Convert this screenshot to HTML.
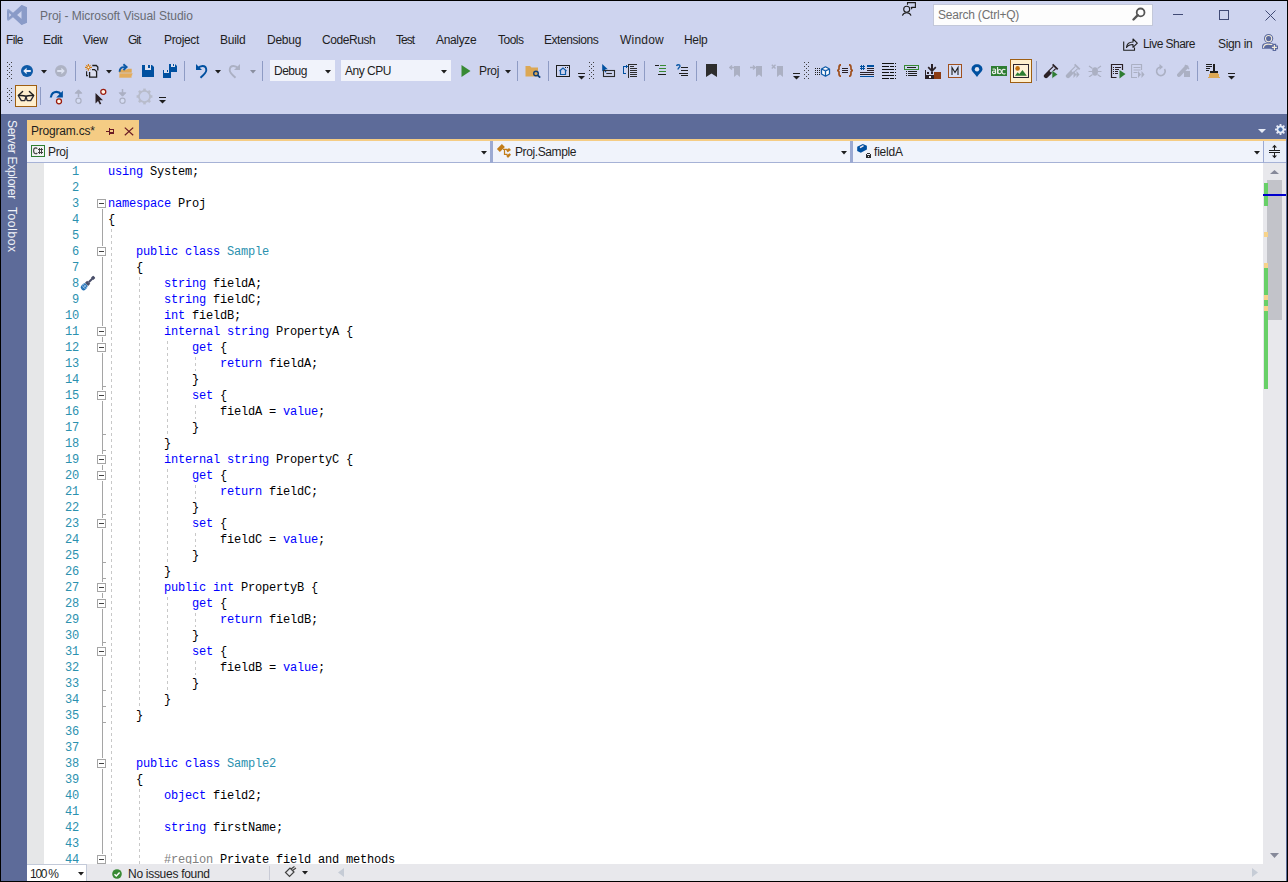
<!DOCTYPE html>
<html><head><meta charset="utf-8"><title>Proj - Microsoft Visual Studio</title>
<style>
html,body{margin:0;padding:0;}
body{width:1288px;height:882px;overflow:hidden;position:relative;background:#CED4EF;font-family:"Liberation Sans",sans-serif;}
.t{position:absolute;white-space:pre;line-height:16px;font-family:"Liberation Sans",sans-serif;}
.code{position:absolute;left:108px;top:164px;font-family:"Liberation Mono",monospace;font-size:12px;letter-spacing:-0.2px;line-height:16px;white-space:pre;color:#000;}
.code div{height:16px;}
.k{color:#0000FF}.c{color:#2B91AF}.g{color:#808080}
.ln{position:absolute;left:44px;width:36px;text-align:right;font-family:"Liberation Mono",monospace;font-size:12px;letter-spacing:-0.2px;line-height:16px;color:#2B91AF;white-space:pre;}
svg{display:block}
</style></head><body>
<svg style="position:absolute;left:7px;top:5px;" width="21" height="21" viewBox="0 0 21 21"><path d="M0 4.6 L1.6 3.9 L7 8.4 L14.7 0 L20 2.4 V17.5 L14.7 19.8 L7 11.4 L1.6 15.8 L0 15.2 Z M2 6.7 V13.1 L5.4 9.9 Z M10.1 9.9 L15 14.1 V5.8 Z" fill="#93A4CD" fill-rule="evenodd"/></svg>
<svg style="position:absolute;left:7px;top:5px;" width="20" height="20" viewBox="0 0 20 20"><path d="M14.5 0 L20 2.3 V17.7 L14.5 20 L5.5 11.8 L2 14.6 L0 13.6 V6.4 L2 5.4 L5.5 8.2 Z M14.5 5.6 L9.6 10 L14.5 14.4 Z M2.2 8 V12 L4.4 10 Z" fill="#8A9BC8" fill-rule="evenodd"/></svg>
<div class="t" style="left:40px;top:8px;font-size:12px;color:#686B73;letter-spacing:-0.034px;">Proj - Microsoft Visual Studio</div>
<svg style="position:absolute;left:896px;top:0px;" width="24" height="18" viewBox="0 0 24 18"><path d="M11.5 4.8 V2.6 H19.4 V7.4 H15.4" fill="none" stroke="#1E1E1E" stroke-width="1.1"/><path d="M14.6 7 L15.4 9.8 L17.2 7 Z" fill="#1E1E1E"/><circle cx="10.7" cy="9.3" r="3" fill="none" stroke="#1E1E1E" stroke-width="1.1"/><path d="M6.4 15.6 C7 13.6 8.5 12.7 10.7 12.7 C12.9 12.7 14.4 13.6 15 15.6" fill="none" stroke="#1E1E1E" stroke-width="1.1"/></svg>
<div style="position:absolute;left:933px;top:4px;width:220px;height:22px;background:#FDFDFD;box-sizing:border-box;border:1px solid #C3C8D9;"></div>
<div class="t" style="left:938px;top:7px;font-size:12px;color:#717171;letter-spacing:-0.214px;">Search (Ctrl+Q)</div>
<svg style="position:absolute;left:1132px;top:7px;" width="14" height="14" viewBox="0 0 14 14"><circle cx="8.6" cy="5.4" r="3.9" fill="none" stroke="#555" stroke-width="1.8"/><path d="M5.8 8.2 L1.5 12.5" stroke="#555" stroke-width="2.4" stroke-linecap="round"/></svg>
<div style="position:absolute;left:1173px;top:14px;width:10px;height:1px;background:#404A75;"></div>
<div style="position:absolute;left:1219px;top:10px;width:10px;height:10px;background:transparent;box-sizing:border-box;border:1px solid #404A75;"></div>
<svg style="position:absolute;left:1265px;top:10px;" width="11" height="11" viewBox="0 0 11 11"><path d="M0.5 0.5 L10.5 10.5 M10.5 0.5 L0.5 10.5" stroke="#404A75" stroke-width="1"/></svg>
<div class="t" style="left:6px;top:32px;font-size:12px;color:#1E1E1E;letter-spacing:-0.667px;">File</div>
<div class="t" style="left:43px;top:32px;font-size:12px;color:#1E1E1E;letter-spacing:-0.333px;">Edit</div>
<div class="t" style="left:83px;top:32px;font-size:12px;color:#1E1E1E;letter-spacing:-0.333px;">View</div>
<div class="t" style="left:128px;top:32px;font-size:12px;color:#1E1E1E;letter-spacing:-1.000px;">Git</div>
<div class="t" style="left:164px;top:32px;font-size:12px;color:#1E1E1E;letter-spacing:-0.333px;">Project</div>
<div class="t" style="left:220px;top:32px;font-size:12px;color:#1E1E1E;letter-spacing:-0.250px;">Build</div>
<div class="t" style="left:267px;top:32px;font-size:12px;color:#1E1E1E;letter-spacing:-0.250px;">Debug</div>
<div class="t" style="left:322px;top:32px;font-size:12px;color:#1E1E1E;letter-spacing:-0.429px;">CodeRush</div>
<div class="t" style="left:396px;top:32px;font-size:12px;color:#1E1E1E;letter-spacing:-1.000px;">Test</div>
<div class="t" style="left:436px;top:32px;font-size:12px;color:#1E1E1E;letter-spacing:-0.333px;">Analyze</div>
<div class="t" style="left:498px;top:32px;font-size:12px;color:#1E1E1E;letter-spacing:-0.500px;">Tools</div>
<div class="t" style="left:544px;top:32px;font-size:12px;color:#1E1E1E;letter-spacing:-0.444px;">Extensions</div>
<div class="t" style="left:620px;top:32px;font-size:12px;color:#1E1E1E;letter-spacing:0.200px;">Window</div>
<div class="t" style="left:684px;top:32px;font-size:12px;color:#1E1E1E;letter-spacing:-0.333px;">Help</div>
<svg style="position:absolute;left:1123px;top:37px;" width="15" height="14" viewBox="0 0 15 14"><path d="M0.7 4.5 V13.3 H11.5 V10.5" fill="none" stroke="#1e1e1e" stroke-width="1.1"/><path d="M3.5 10.5 C3.8 6.5 6.5 5 10 5 V2 L14.3 6.2 L10 10.3 V7.5 C7.2 7.5 5 8.3 3.5 10.5 Z" fill="none" stroke="#1e1e1e" stroke-width="1.1" stroke-linejoin="round"/></svg>
<div class="t" style="left:1143px;top:36px;font-size:12px;color:#1E1E1E;letter-spacing:-0.556px;">Live Share</div>
<div class="t" style="left:1218px;top:36px;font-size:12px;color:#1E1E1E;letter-spacing:-0.333px;">Sign in</div>
<svg style="position:absolute;left:1256px;top:30px;" width="30" height="26" viewBox="0 0 30 26"><path d="M6 18.7 V16.5 C6 13.5 8.5 12.7 12.3 12.7 C15 12.7 17 13.3 17.8 14.5 V18.7 Z" fill="#5B6A9E"/><path d="M7.4 17.9 C7.6 15.2 9.5 14.1 12.3 14.1 C14 14.1 15.6 14.5 16.5 15.1" fill="none" stroke="#F3EBD8" stroke-width="1.2"/><circle cx="12.6" cy="8.6" r="4.6" fill="#5B6A9E"/><circle cx="12.6" cy="8.6" r="3.1" fill="#5B6A9E" stroke="#F3EBD8" stroke-width="1.1"/><path d="M18.4 13.8 V21 M14.8 17.4 H22" stroke="#5B6A9E" stroke-width="3.6"/><path d="M18.4 14.9 V19.9 M15.9 17.4 H20.9" stroke="#F3EBD8" stroke-width="1.2"/></svg>
<svg style="position:absolute;left:7px;top:62px;" width="5" height="18" viewBox="0 0 5 18" shape-rendering="crispEdges"><g fill="#404040"><rect x="0" y="0" width="1" height="1"/><rect x="4" y="0" width="1" height="1"/><rect x="2" y="2" width="1" height="1"/><rect x="0" y="4" width="1" height="1"/><rect x="4" y="4" width="1" height="1"/><rect x="2" y="6" width="1" height="1"/><rect x="0" y="8" width="1" height="1"/><rect x="4" y="8" width="1" height="1"/><rect x="2" y="10" width="1" height="1"/><rect x="0" y="12" width="1" height="1"/><rect x="4" y="12" width="1" height="1"/><rect x="2" y="14" width="1" height="1"/><rect x="0" y="16" width="1" height="1"/><rect x="4" y="16" width="1" height="1"/></g></svg>
<svg style="position:absolute;left:21px;top:65px;" width="12" height="12" viewBox="0 0 12 12"><circle cx="6" cy="6" r="6" fill="#0E5AA7"/><path d="M2.2 6 L5.6 2.8 V5 H9.8 V7 H5.6 V9.2 Z" fill="#E8ECF8"/></svg>
<svg style="position:absolute;left:41px;top:70px;" width="6" height="4" viewBox="0 0 6 4"><path d="M0 0 H6 L3 3.5 Z" fill="#1E1E1E"/></svg>
<svg style="position:absolute;left:55px;top:65px;" width="12" height="12" viewBox="0 0 12 12"><circle cx="6" cy="6" r="6" fill="#AEB3C4"/><path d="M9.8 6 L6.4 2.8 V5 H2.2 V7 H6.4 V9.2 Z" fill="#DDE2F0"/></svg>
<div style="position:absolute;left:75px;top:61px;width:1px;height:20px;background:#8E9BC4;"></div>
<svg style="position:absolute;left:85px;top:64px;" width="14" height="15" viewBox="0 0 14 15"><g stroke="#D67F16" stroke-width="1.2"><path d="M3.4 -0.2 V6.8 M-0.1 3.3 H6.9"/><path d="M1 0.9 L5.8 5.7 M5.8 0.9 L1 5.7" stroke-width="0.9"/></g><circle cx="3.4" cy="3.3" r="1.4" fill="#F5F0E6" stroke="#D67F16" stroke-width="1"/><path d="M7.3 1.5 H11.3 L12.8 3 V6.6" fill="none" stroke="#1E1E1E" stroke-width="1.3"/><path d="M4.6 8 V13.2 H11.6 V7.6 L9.5 5.6 H7" fill="#DCDFEF" stroke="#1E1E1E" stroke-width="1.3"/><path d="M1.6 7.2 V11.6 H2.9" fill="none" stroke="#1E1E1E" stroke-width="1.1"/></svg>
<svg style="position:absolute;left:106px;top:70px;" width="6" height="4" viewBox="0 0 6 4"><path d="M0 0 H6 L3 3.5 Z" fill="#1E1E1E"/></svg>
<svg style="position:absolute;left:116px;top:62px;" width="20" height="18" viewBox="0 0 20 18"><path d="M3 7.5 H11 L12 6.7 H15.7 V16 H3 Z" fill="#DFA857"/><path d="M3.4 11 H17.1 L15.2 16 H3 Z" fill="#E3AC5C" stroke="#CED4EF" stroke-width="0.6"/><path d="M3.6 9.8 C3.6 6.6 5 5.1 8 5.1 H10.4" fill="none" stroke="#0E5AA7" stroke-width="1.9"/><path d="M7.4 2.3 L10.6 5.1 L7.4 8" fill="none" stroke="#0E5AA7" stroke-width="1.9"/></svg>
<svg style="position:absolute;left:142px;top:65px;" width="12" height="12" viewBox="0 0 12 12" shape-rendering="crispEdges"><path d="M0 0 H10 L12 2 V12 H0 Z" fill="#0050A0" shape-rendering="auto"/><rect x="3" y="0" width="6" height="5" fill="#DCE0F0"/><rect x="6" y="0" width="2" height="3" fill="#0050A0"/></svg>
<svg style="position:absolute;left:163px;top:64px;" width="14" height="14" viewBox="0 0 14 14" shape-rendering="crispEdges"><path d="M6 0 H12 L14 2 V8 H6 Z" fill="#0050A0" shape-rendering="auto"/><rect x="8" y="0" width="4" height="3" fill="#DCE0F0"/><rect x="10" y="0" width="1" height="2" fill="#0050A0"/><path d="M0 6 H6 L8 8 V14 H0 Z" fill="#0050A0" shape-rendering="auto"/><rect x="1" y="6" width="5" height="3" fill="#DCE0F0"/><rect x="4" y="6" width="1" height="2" fill="#0050A0"/></svg>
<div style="position:absolute;left:184px;top:61px;width:1px;height:20px;background:#8E9BC4;"></div>
<svg style="position:absolute;left:193px;top:62px;" width="15" height="18" viewBox="0 0 15 18"><path d="M3 2 V8 H9 Z" fill="#0050A0"/><path d="M4.5 6.5 C6.5 4.5 8 4 9.5 4 C12 4 13.3 5.8 13.3 8.2 C13.3 10.5 11.5 12.2 7.5 15.8" fill="none" stroke="#0050A0" stroke-width="1.9"/></svg>
<svg style="position:absolute;left:215px;top:70px;" width="6" height="4" viewBox="0 0 6 4"><path d="M0 0 H6 L3 3.5 Z" fill="#1E1E1E"/></svg>
<svg style="position:absolute;left:228px;top:62px;" width="15" height="18" viewBox="0 0 15 18"><path d="M12 2 V8 H6 Z" fill="#ABB0C3"/><path d="M10.5 6.5 C8.5 4.5 7 4 5.5 4 C3 4 1.7 5.8 1.7 8.2 C1.7 10.5 3.5 12.2 7.5 15.8" fill="none" stroke="#ABB0C3" stroke-width="1.9"/></svg>
<svg style="position:absolute;left:250px;top:70px;" width="6" height="4" viewBox="0 0 6 4"><path d="M0 0 H6 L3 3.5 Z" fill="#8A8FA0"/></svg>
<div style="position:absolute;left:262px;top:61px;width:1px;height:20px;background:#8E9BC4;"></div>
<div style="position:absolute;left:270px;top:60px;width:65px;height:21px;background:#F1F3FB;"></div>
<div class="t" style="left:274px;top:63px;font-size:12px;color:#1E1E1E;letter-spacing:-0.500px;">Debug</div>
<svg style="position:absolute;left:325px;top:70px;" width="6" height="4" viewBox="0 0 6 4"><path d="M0 0 H6 L3 3.5 Z" fill="#1E1E1E"/></svg>
<div style="position:absolute;left:341px;top:60px;width:110px;height:21px;background:#F1F3FB;"></div>
<div class="t" style="left:345px;top:63px;font-size:12px;color:#1E1E1E;letter-spacing:-0.500px;">Any CPU</div>
<svg style="position:absolute;left:441px;top:70px;" width="6" height="4" viewBox="0 0 6 4"><path d="M0 0 H6 L3 3.5 Z" fill="#1E1E1E"/></svg>
<svg style="position:absolute;left:461px;top:65px;" width="10" height="12" viewBox="0 0 10 12"><path d="M0.5 0 L9.5 6 L0.5 12 Z" fill="#388A34"/></svg>
<div class="t" style="left:479px;top:63px;font-size:12px;color:#1E1E1E;letter-spacing:-0.333px;">Proj</div>
<svg style="position:absolute;left:505px;top:70px;" width="6" height="4" viewBox="0 0 6 4"><path d="M0 0 H6 L3 3.5 Z" fill="#1E1E1E"/></svg>
<div style="position:absolute;left:517px;top:61px;width:1px;height:20px;background:#8E9BC4;"></div>
<svg style="position:absolute;left:525px;top:64px;" width="16" height="14" viewBox="0 0 16 14"><path d="M0.5 2 H5 L6.5 3.5 H13 V12.5 H0.5 Z" fill="#DCA855"/><circle cx="11" cy="9.5" r="2.3" fill="#DCA855" stroke="#0E3F7A" stroke-width="1.4"/><path d="M12.6 11.1 L15.2 13.6" stroke="#0E3F7A" stroke-width="1.8"/></svg>
<div style="position:absolute;left:548px;top:61px;width:1px;height:20px;background:#8E9BC4;"></div>
<svg style="position:absolute;left:556px;top:65px;" width="14" height="12" viewBox="0 0 14 12" shape-rendering="crispEdges"><rect x="0.5" y="0.5" width="13" height="11" fill="none" stroke="#1E1E1E" stroke-width="1"/><path d="M3.5 6 L7 3 L10.5 6 M4.5 5.5 V9.5 H9.5 V5.5" fill="none" stroke="#0E5AA7" stroke-width="1.2" shape-rendering="auto"/><rect x="11" y="2" width="1" height="1" fill="#1E1E1E"/><rect x="9" y="2" width="1" height="1" fill="#1E1E1E"/></svg>
<svg style="position:absolute;left:578px;top:73px;" width="7" height="7" viewBox="0 0 7 7" shape-rendering="crispEdges"><g fill="#1E1E1E"><rect x="0" y="0" width="7" height="1"/><path d="M0 3 H7 L3.5 6.5 Z" shape-rendering="auto"/></g></svg>
<svg style="position:absolute;left:589px;top:62px;" width="5" height="18" viewBox="0 0 5 18" shape-rendering="crispEdges"><g fill="#404040"><rect x="0" y="0" width="1" height="1"/><rect x="4" y="0" width="1" height="1"/><rect x="2" y="2" width="1" height="1"/><rect x="0" y="4" width="1" height="1"/><rect x="4" y="4" width="1" height="1"/><rect x="2" y="6" width="1" height="1"/><rect x="0" y="8" width="1" height="1"/><rect x="4" y="8" width="1" height="1"/><rect x="2" y="10" width="1" height="1"/><rect x="0" y="12" width="1" height="1"/><rect x="4" y="12" width="1" height="1"/><rect x="2" y="14" width="1" height="1"/><rect x="0" y="16" width="1" height="1"/><rect x="4" y="16" width="1" height="1"/></g></svg>
<svg style="position:absolute;left:600px;top:62px;" width="18" height="18" viewBox="0 0 18 18"><path d="M2.2 2 V9.5 L4 7.8 L5.3 10.5 L6.4 10 L5.2 7.3 H7.8 Z" fill="#0050A0"/><rect x="3.5" y="8.5" width="11" height="6" fill="none" stroke="#2D2D2D" stroke-width="1.1"/><path d="M6.3 11.5 H11.9" stroke="#2D2D2D" stroke-width="1.1"/></svg>
<svg style="position:absolute;left:622px;top:62px;" width="16" height="17" viewBox="0 0 16 17" shape-rendering="crispEdges"><g fill="#0050A0"><rect x="1" y="4" width="1" height="8"/><rect x="1" y="4" width="3" height="1"/><rect x="1" y="11" width="3" height="1"/><rect x="4" y="3" width="1" height="3"/><rect x="3" y="4" width="3" height="1"/></g><g fill="#2D2D2D"><rect x="6" y="2" width="1" height="14"/><rect x="6" y="2" width="9" height="1"/><rect x="8" y="4" width="4" height="1"/><rect x="8" y="6" width="7" height="1"/><rect x="8" y="8" width="7" height="1"/><rect x="8" y="10" width="7" height="1"/><rect x="8" y="12" width="7" height="1"/><rect x="8" y="14" width="7" height="1"/></g></svg>
<div style="position:absolute;left:644px;top:61px;width:1px;height:20px;background:#8E9BC4;"></div>
<svg style="position:absolute;left:655px;top:65px;" width="11" height="10" viewBox="0 0 11 10" shape-rendering="crispEdges"><g fill="#1E1E1E"><rect x="0" y="0" width="4" height="1"/><rect x="3" y="9" width="8" height="1"/></g><g fill="#388A34"><rect x="4" y="3" width="7" height="1"/><rect x="4" y="6" width="7" height="1"/><rect x="5" y="0" width="6" height="1"/></g></svg>
<svg style="position:absolute;left:676px;top:64px;" width="12" height="12" viewBox="0 0 12 12" shape-rendering="crispEdges"><path d="M0.5 2 C1 0.3 4 0.3 4 2 C4 3.5 2 3.5 2 5.5" fill="none" stroke="#0E5AA7" stroke-width="1.4" shape-rendering="auto"/><g fill="#1E1E1E"><rect x="5" y="3" width="7" height="1"/><rect x="5" y="6" width="7" height="1"/><rect x="3" y="9" width="9" height="1"/><rect x="5" y="11" width="7" height="1"/></g></svg>
<div style="position:absolute;left:696px;top:61px;width:1px;height:20px;background:#8E9BC4;"></div>
<svg style="position:absolute;left:706px;top:64px;" width="11" height="13" viewBox="0 0 11 13" shape-rendering="crispEdges"><path d="M0 0 H11 V13 L5.5 9.5 L0 13 Z" fill="#2D2D2D" shape-rendering="auto"/></svg>
<svg style="position:absolute;left:729px;top:64px;" width="11" height="13" viewBox="0 0 11 13"><path d="M5 2 H11 V13 L8 10.5 L5 13 Z" fill="#ABB0C3"/><path d="M5 3.5 H0.8 M3 1.5 L0.8 3.5 L3 5.5" fill="none" stroke="#ABB0C3" stroke-width="1.4"/></svg>
<svg style="position:absolute;left:750px;top:64px;" width="12" height="13" viewBox="0 0 12 13"><path d="M6 2 H12 V13 L9 10.5 L6 13 Z" fill="#ABB0C3"/><path d="M0 3.5 H5 M3 1.5 L5.2 3.5 L3 5.5" fill="none" stroke="#ABB0C3" stroke-width="1.4"/></svg>
<svg style="position:absolute;left:771px;top:64px;" width="12" height="13" viewBox="0 0 12 13"><path d="M6 2 H12 V13 L9 10.5 L6 13 Z" fill="#ABB0C3"/><path d="M0.8 0.8 L4.5 4.5 M4.5 0.8 L0.8 4.5" fill="none" stroke="#ABB0C3" stroke-width="1.4"/></svg>
<svg style="position:absolute;left:793px;top:73px;" width="7" height="7" viewBox="0 0 7 7" shape-rendering="crispEdges"><g fill="#1E1E1E"><rect x="0" y="0" width="7" height="1"/><path d="M0 3 H7 L3.5 6.5 Z" shape-rendering="auto"/></g></svg>
<svg style="position:absolute;left:804px;top:62px;" width="5" height="18" viewBox="0 0 5 18" shape-rendering="crispEdges"><g fill="#404040"><rect x="0" y="0" width="1" height="1"/><rect x="4" y="0" width="1" height="1"/><rect x="2" y="2" width="1" height="1"/><rect x="0" y="4" width="1" height="1"/><rect x="4" y="4" width="1" height="1"/><rect x="2" y="6" width="1" height="1"/><rect x="0" y="8" width="1" height="1"/><rect x="4" y="8" width="1" height="1"/><rect x="2" y="10" width="1" height="1"/><rect x="0" y="12" width="1" height="1"/><rect x="4" y="12" width="1" height="1"/><rect x="2" y="14" width="1" height="1"/><rect x="0" y="16" width="1" height="1"/><rect x="4" y="16" width="1" height="1"/></g></svg>
<svg style="position:absolute;left:815px;top:66px;" width="16" height="11" viewBox="0 0 16 11"><g fill="#1E1E1E"><rect x="0" y="2" width="1" height="1"/><rect x="2" y="2" width="1" height="1"/><rect x="0" y="4" width="1" height="1"/><rect x="2" y="4" width="1" height="1"/><rect x="0" y="6" width="1" height="1"/><rect x="2" y="6" width="1" height="1"/><rect x="0" y="8" width="1" height="1"/><rect x="2" y="8" width="1" height="1"/><rect x="4" y="2" width="1" height="1"/><rect x="4" y="4" width="1" height="1"/><rect x="4" y="6" width="1" height="1"/><rect x="4" y="8" width="1" height="1"/></g><path d="M6.5 3 L10.5 0.8 L14.5 3 V8 L10.5 10.2 L6.5 8 Z M6.5 3 L10.5 5 L14.5 3 M10.5 5 V10" fill="#FFFFFF" stroke="#0E5AA7" stroke-width="1.3" stroke-linejoin="round"/></svg>
<svg style="position:absolute;left:837px;top:64px;" width="16" height="13" viewBox="0 0 16 13"><path d="M4 0.8 C2 0.8 2 1.8 2 3.5 V5.2 L0.8 6.5 L2 7.8 V9.5 C2 11.2 2 12.2 4 12.2 M12 0.8 C14 0.8 14 1.8 14 3.5 V5.2 L15.2 6.5 L14 7.8 V9.5 C14 11.2 14 12.2 12 12.2" fill="none" stroke="#A0501E" stroke-width="1.7"/><g fill="#2A2025" shape-rendering="crispEdges"><rect x="5" y="4" width="6" height="1"/><rect x="5" y="6" width="6" height="1"/><rect x="5" y="8" width="6" height="1"/></g></svg>
<svg style="position:absolute;left:860px;top:64px;" width="14" height="14" viewBox="0 0 14 14" shape-rendering="crispEdges"><g fill="#0050A0"><rect x="1" y="1" width="1" height="5"/><rect x="3" y="1" width="1" height="5"/><rect x="0" y="2" width="5" height="1"/><rect x="0" y="4" width="5" height="1"/><rect x="7" y="1" width="7" height="2"/><rect x="0" y="12" width="14" height="1"/></g><g fill="#2A2025"><rect x="7" y="4" width="7" height="1"/><rect x="7" y="6" width="7" height="1"/><rect x="0" y="8" width="14" height="1"/><rect x="0" y="10" width="14" height="1"/></g></svg>
<svg style="position:absolute;left:882px;top:63px;" width="15" height="17" viewBox="0 0 15 17" shape-rendering="crispEdges"><g fill="#111"><rect x="0" y="0" width="12" height="1"/><rect x="13" y="0" width="1" height="1"/><rect x="0" y="3" width="7" height="1"/><rect x="8" y="3" width="4" height="1"/><rect x="13" y="3" width="1" height="1"/><rect x="0" y="6" width="12" height="1"/><rect x="13" y="6" width="1" height="1"/><rect x="0" y="9" width="7" height="1"/><rect x="8" y="9" width="4" height="1"/><rect x="13" y="9" width="1" height="1"/><rect x="0" y="12" width="12" height="1"/><rect x="13" y="12" width="1" height="1"/><rect x="0" y="15" width="7" height="1"/><rect x="8" y="15" width="4" height="1"/><rect x="13" y="15" width="1" height="1"/></g></svg>
<svg style="position:absolute;left:904px;top:65px;" width="15" height="12" viewBox="0 0 15 12" shape-rendering="crispEdges"><rect x="0.5" y="0.5" width="14" height="4" fill="none" stroke="#388A34" stroke-width="1"/><rect x="3" y="2" width="9" height="1" fill="#1E1E1E"/><g fill="#1E1E1E"><rect x="2" y="6" width="1" height="1"/><rect x="4" y="6" width="9" height="1"/><rect x="2" y="8" width="1" height="1"/><rect x="4" y="8" width="9" height="1"/><rect x="2" y="10" width="1" height="1"/><rect x="4" y="10" width="9" height="1"/></g></svg>
<svg style="position:absolute;left:924px;top:62px;" width="18" height="18" viewBox="0 0 18 18" shape-rendering="crispEdges"><g fill="#2A2025"><rect x="7" y="2" width="2" height="6"/><rect x="1" y="8" width="1" height="9"/><rect x="1" y="13" width="10" height="4"/><rect x="10" y="12" width="1" height="5"/><rect x="3" y="10" width="2" height="2"/><rect x="7" y="10" width="2" height="2"/></g><rect x="5" y="14" width="2" height="2" fill="#F0F0F4"/><path d="M4.2 5.2 L8 9 L11.8 5.2" fill="none" stroke="#2A2025" stroke-width="1.7" shape-rendering="auto"/><rect x="10" y="10" width="7" height="7" fill="#8B3A12"/></svg>
<svg style="position:absolute;left:948px;top:64px;" width="14" height="14" viewBox="0 0 14 14" shape-rendering="crispEdges"><rect x="0.5" y="0.5" width="13" height="13" fill="#D8DFF6" stroke="#A0501E" stroke-width="1"/><path d="M4 11 V3.5 L7 8.5 L10 3.5 V11" fill="none" stroke="#1E1E1E" stroke-width="1.1" stroke-linejoin="miter" shape-rendering="auto"/></svg>
<svg style="position:absolute;left:971px;top:64px;" width="12" height="13" viewBox="0 0 12 13"><path d="M6 13 C3 9 0.5 7 0.5 5.3 C0.5 2.3 3 0.3 6 0.3 C9 0.3 11.5 2.3 11.5 5.3 C11.5 7 9 9 6 13 Z" fill="#0050A0"/><circle cx="6" cy="5.3" r="2.2" fill="#DDE2F0"/></svg>
<div style="position:absolute;left:991px;top:66px;width:16px;height:10px;background:#2E7D32;"></div>
<svg style="position:absolute;left:991px;top:66px;" width="16" height="10" viewBox="0 0 16 10"><g fill="none" stroke="#F2F2F2" stroke-width="1.05"><path d="M1.6 3.3 C2.5 2.8 4.5 2.7 4.6 4 V7.8"/><ellipse cx="3" cy="6.3" rx="1.6" ry="1.3"/><path d="M6.6 1 V7.8"/><ellipse cx="8.6" cy="5.6" rx="1.8" ry="2.1"/><path d="M14.4 3.9 C13.9 3.3 13.4 3.2 12.9 3.2 C11.8 3.2 11 4.1 11 5.6 C11 7.1 11.8 8 12.9 8 C13.4 8 13.9 7.8 14.4 7.3"/></g></svg>
<div style="position:absolute;left:1010px;top:59px;width:22px;height:24px;background:#FFEFCE;box-sizing:border-box;border:1px solid #9E5E12;"></div>
<svg style="position:absolute;left:1013px;top:64px;" width="16" height="14" viewBox="0 0 16 14" shape-rendering="crispEdges"><rect x="0.5" y="0.5" width="15" height="13" fill="#FFF1D8" stroke="#2D2630" stroke-width="1"/><circle cx="4.6" cy="4.4" r="2.3" fill="#C2700F" shape-rendering="auto"/><path d="M2 11.8 L4.6 8.2 L6.3 10 L9.5 6 L13.8 11.8 Z" fill="#2E7D32" shape-rendering="auto"/></svg>
<div style="position:absolute;left:1036px;top:61px;width:1px;height:20px;background:#8E9BC4;"></div>
<svg style="position:absolute;left:1043px;top:62px;" width="18" height="18" viewBox="0 0 18 18"><g transform="translate(8,9) rotate(-45)"><path d="M-7 -2.2 H-1 V2.2 H-7 A2.2 2.2 0 0 1 -7 -2.2 Z" fill="#2A2025"/><path d="M-1.5 -1.6 H5 M-1.5 1.6 H5" stroke="#2A2025" stroke-width="1.2"/><rect x="5" y="-3.6" width="1.8" height="7.2" fill="#2A2025"/></g><path d="M9 8.2 L14.8 12.4 L9 16.6 Z" fill="#2E7D32" stroke="#CED4EF" stroke-width="0.6"/></svg>
<svg style="position:absolute;left:1065px;top:62px;" width="18" height="18" viewBox="0 0 18 18"><g transform="translate(8,9) rotate(-45)"><path d="M-7 -2.2 H-1 V2.2 H-7 A2.2 2.2 0 0 1 -7 -2.2 Z" fill="#ABB0C3"/><path d="M-1.5 -1.6 H5 M-1.5 1.6 H5" stroke="#ABB0C3" stroke-width="1.2"/><rect x="5" y="-3.6" width="1.8" height="7.2" fill="#ABB0C3"/></g><path d="M8.5 9 L11.5 12.5 L8.5 16 Z M11.5 9 L14.5 12.5 L11.5 16 Z" fill="#ABB0C3"/></svg>
<svg style="position:absolute;left:1088px;top:64px;" width="14" height="13" viewBox="0 0 14 13"><ellipse cx="7" cy="7.5" rx="3" ry="4.2" fill="#ABB0C3"/><path d="M1 2 L4.5 4.5 M13 2 L9.5 4.5 M0.5 7.5 H4 M13.5 7.5 H10 M1 13 L4.5 10.5 M13 13 L9.5 10.5" stroke="#ABB0C3" stroke-width="1.2"/></svg>
<svg style="position:absolute;left:1110px;top:63px;" width="17" height="17" viewBox="0 0 17 17"><path d="M6.5 14.5 H1.5 V1.5 H12.5 V7" fill="none" stroke="#2A2025" stroke-width="1.2"/><g fill="#2A2025" shape-rendering="crispEdges"><rect x="3" y="4" width="1" height="1"/><rect x="5" y="4" width="6" height="1"/><rect x="3" y="6" width="1" height="1"/><rect x="5" y="6" width="4" height="1"/><rect x="3" y="8" width="1" height="1"/><rect x="5" y="8" width="3" height="1"/><rect x="3" y="10" width="1" height="1"/><rect x="5" y="10" width="3" height="1"/></g><path d="M9.5 7 L15.5 11 L9.5 15.5 Z" fill="#2E7D32"/></svg>
<svg style="position:absolute;left:1131px;top:64px;" width="15" height="14" viewBox="0 0 15 14"><path d="M0.5 0.5 H10.5 V6 M0.5 0.5 V13.5 H6" fill="none" stroke="#ABB0C3" stroke-width="1.2"/><g fill="#ABB0C3"><rect x="2.5" y="3" width="7" height="1"/><rect x="2.5" y="5.5" width="7" height="1"/><rect x="2.5" y="8" width="4" height="1"/><path d="M7 7 L10 10.5 L7 14 Z M10.5 7 L13.5 10.5 L10.5 14 Z"/></g></svg>
<svg style="position:absolute;left:1155px;top:64px;" width="12" height="14" viewBox="0 0 12 14"><path d="M9.5 5 A4.3 4.3 0 1 1 5.5 3" fill="none" stroke="#ABB0C3" stroke-width="1.6"/><path d="M4.5 0 L8 3 L4.5 6 Z" fill="#ABB0C3"/></svg>
<svg style="position:absolute;left:1177px;top:63px;" width="14" height="15" viewBox="0 0 14 15"><path d="M2 12 L9.5 4" stroke="#ABB0C3" stroke-width="4" stroke-linecap="round"/><path d="M8 2 L12 6" stroke="#ABB0C3" stroke-width="1.5"/><rect x="7" y="8" width="6" height="6" fill="#ABB0C3"/></svg>
<div style="position:absolute;left:1197px;top:61px;width:1px;height:20px;background:#8E9BC4;"></div>
<svg style="position:absolute;left:1206px;top:64px;" width="15" height="14" viewBox="0 0 15 14" shape-rendering="crispEdges"><g fill="#1E1E1E"><rect x="0" y="0" width="6" height="1"/><rect x="0" y="2" width="6" height="1"/><rect x="0" y="4" width="4" height="1"/><rect x="0" y="6" width="3" height="1"/><rect x="7" y="0" width="2" height="7"/><rect x="4" y="7" width="8" height="2"/></g><path d="M4 9 H12 L14 14 H2 Z" fill="#DCA855"/></svg>
<svg style="position:absolute;left:1228px;top:73px;" width="7" height="7" viewBox="0 0 7 7" shape-rendering="crispEdges"><g fill="#1E1E1E"><rect x="0" y="0" width="7" height="1"/><path d="M0 3 H7 L3.5 6.5 Z" shape-rendering="auto"/></g></svg>
<svg style="position:absolute;left:7px;top:88px;" width="5" height="16" viewBox="0 0 5 16" shape-rendering="crispEdges"><g fill="#404040"><rect x="0" y="0" width="1" height="1"/><rect x="4" y="0" width="1" height="1"/><rect x="2" y="2" width="1" height="1"/><rect x="0" y="4" width="1" height="1"/><rect x="4" y="4" width="1" height="1"/><rect x="2" y="6" width="1" height="1"/><rect x="0" y="8" width="1" height="1"/><rect x="4" y="8" width="1" height="1"/><rect x="2" y="10" width="1" height="1"/><rect x="0" y="12" width="1" height="1"/><rect x="4" y="12" width="1" height="1"/><rect x="2" y="14" width="1" height="1"/></g></svg>
<div style="position:absolute;left:15px;top:85px;width:22px;height:22px;background:#FFEFCE;box-sizing:border-box;border:1px solid #9E5E12;"></div>
<svg style="position:absolute;left:15px;top:85px;" width="22" height="22" viewBox="0 0 22 22"><path d="M3.3 10.6 L7.6 6.5 M18.7 10.6 L14.4 6.5" stroke="#1E1E1E" stroke-width="1.4" stroke-linecap="round"/><path d="M3.3 10.6 C6 10.3 9 10.5 11 11.3 C13 10.5 16 10.3 18.7 10.6" fill="none" stroke="#1E1E1E" stroke-width="1.5"/><path d="M3.5 10.8 L6.3 15.6 H9.8 L11 11.5 L12.2 15.6 H15.7 L18.5 10.8" fill="none" stroke="#2A2A35" stroke-width="1.3" stroke-linejoin="round"/></svg>
<div style="position:absolute;left:40px;top:87px;width:1px;height:18px;background:#8E9BC4;"></div>
<svg style="position:absolute;left:49px;top:89px;" width="15" height="16" viewBox="0 0 15 16"><path d="M1.8 8.5 C2.2 4.5 5 2.8 7.5 2.8 C9.5 2.8 11 3.8 12.2 5.5" fill="none" stroke="#0050A0" stroke-width="2.2"/><path d="M13.9 1.8 V8.6 H7.2 Z" fill="#0050A0"/><circle cx="10" cy="12.3" r="2.5" fill="#FFF8E8" stroke="#9B1D10" stroke-width="1.3"/></svg>
<svg style="position:absolute;left:74px;top:88px;" width="9" height="16" viewBox="0 0 9 16"><path d="M4.5 4 V9" stroke="#ABB0C3" stroke-width="1.5"/><path d="M1.2 5.2 L4.5 1.8 L7.8 5.2 Z" fill="#ABB0C3" stroke="#ABB0C3" stroke-width="1" stroke-linejoin="round"/><circle cx="4.5" cy="12.8" r="2.6" fill="#D5DCF3" stroke="#ABB0C3" stroke-width="1.2"/></svg>
<svg style="position:absolute;left:95px;top:88px;" width="12" height="17" viewBox="0 0 12 17"><path d="M0.5 5 V15.5 L3 13 L4.8 16.5 L6.3 15.8 L4.5 12.3 H8 Z" fill="#2A2025"/><circle cx="8.3" cy="3.8" r="2.5" fill="#FFF8E8" stroke="#9B1D10" stroke-width="1.3"/></svg>
<svg style="position:absolute;left:118px;top:88px;" width="9" height="16" viewBox="0 0 9 16"><path d="M4.5 1 V6" stroke="#ABB0C3" stroke-width="1.5"/><path d="M1.2 4.8 L4.5 8.2 L7.8 4.8 Z" fill="#ABB0C3" stroke="#ABB0C3" stroke-width="1" stroke-linejoin="round"/><circle cx="4.5" cy="12.8" r="2.6" fill="#D5DCF3" stroke="#ABB0C3" stroke-width="1.2"/></svg>
<svg style="position:absolute;left:136px;top:88px;" width="17" height="17" viewBox="0 0 17 17"><g fill="#B8BCCB"><rect x="7.2" y="0.6" width="2.6" height="3" transform="rotate(0 8.5 8.5)"/><rect x="7.2" y="0.6" width="2.6" height="3" transform="rotate(45 8.5 8.5)"/><rect x="7.2" y="0.6" width="2.6" height="3" transform="rotate(90 8.5 8.5)"/><rect x="7.2" y="0.6" width="2.6" height="3" transform="rotate(135 8.5 8.5)"/><rect x="7.2" y="0.6" width="2.6" height="3" transform="rotate(180 8.5 8.5)"/><rect x="7.2" y="0.6" width="2.6" height="3" transform="rotate(225 8.5 8.5)"/><rect x="7.2" y="0.6" width="2.6" height="3" transform="rotate(270 8.5 8.5)"/><rect x="7.2" y="0.6" width="2.6" height="3" transform="rotate(315 8.5 8.5)"/></g><circle cx="8.5" cy="8.5" r="5.6" fill="#CAD1EC" stroke="#B8BCCB" stroke-width="1.8"/></svg>
<svg style="position:absolute;left:159px;top:97px;" width="7" height="7" viewBox="0 0 7 7" shape-rendering="crispEdges"><g fill="#1E1E1E"><rect x="0" y="0" width="7" height="1"/><path d="M0 3 H7 L3.5 6.5 Z" shape-rendering="auto"/></g></svg>
<div style="position:absolute;left:1px;top:114px;width:1286px;height:767px;background:#5D6B99;"></div>
<div class="t" style="left:0px;top:0px;font-size:12px;color:#F0F2F8;transform-origin:0 0;transform:translate(20px,120px) rotate(90deg);letter-spacing:-0.3px;">Server Explorer</div>
<div class="t" style="left:0px;top:0px;font-size:12px;color:#F0F2F8;transform-origin:0 0;transform:translate(20px,207px) rotate(90deg);letter-spacing:0.6px;">Toolbox</div>
<div style="position:absolute;left:27px;top:120px;width:112px;height:19px;background:#F5CC84;"></div>
<div style="position:absolute;left:27px;top:139px;width:1259px;height:2px;background:#F5CC84;"></div>
<div class="t" style="left:31px;top:123px;font-size:12px;color:#1E1E1E;letter-spacing:-0.200px;">Program.cs*</div>
<svg style="position:absolute;left:106px;top:128px;" width="9" height="7" viewBox="0 0 9 7" shape-rendering="crispEdges"><g fill="#6A1B24"><rect x="0" y="3" width="3" height="1"/><rect x="3" y="0" width="1" height="7"/><rect x="4" y="1" width="4" height="1"/><rect x="7" y="1" width="1" height="5"/><rect x="4" y="4" width="4" height="2"/></g></svg>
<svg style="position:absolute;left:124px;top:127px;" width="10" height="9" viewBox="0 0 10 9"><path d="M0.8 0.6 L9.2 8.2 M9.2 0.6 L0.8 8.2" stroke="#6A1B24" stroke-width="1.2"/></svg>
<svg style="position:absolute;left:1258px;top:129px;" width="8" height="4" viewBox="0 0 8 4"><path d="M0 0 H8 L4 4 Z" fill="#E6EAF6"/></svg>
<svg style="position:absolute;left:1275px;top:124px;" width="11" height="11" viewBox="0 0 11 11"><g fill="#E6EAF6"><rect x="4.6" y="0" width="1.8" height="3" transform="rotate(0 5.5 5.5)"/><rect x="4.6" y="0" width="1.8" height="3" transform="rotate(45 5.5 5.5)"/><rect x="4.6" y="0" width="1.8" height="3" transform="rotate(90 5.5 5.5)"/><rect x="4.6" y="0" width="1.8" height="3" transform="rotate(135 5.5 5.5)"/><rect x="4.6" y="0" width="1.8" height="3" transform="rotate(180 5.5 5.5)"/><rect x="4.6" y="0" width="1.8" height="3" transform="rotate(225 5.5 5.5)"/><rect x="4.6" y="0" width="1.8" height="3" transform="rotate(270 5.5 5.5)"/><rect x="4.6" y="0" width="1.8" height="3" transform="rotate(315 5.5 5.5)"/><circle cx="5.5" cy="5.5" r="3.9"/></g><circle cx="5.5" cy="5.5" r="1.7" fill="#5D6B99" stroke="#2F6DB5" stroke-width="0.9"/></svg>
<div style="position:absolute;left:27px;top:141px;width:1259px;height:21px;background:#F0F3FB;"></div>
<div style="position:absolute;left:27px;top:162px;width:1259px;height:1px;background:#A6B2D6;"></div>
<div style="position:absolute;left:490px;top:141px;width:3px;height:22px;background:#9CAAD2;"></div>
<div style="position:absolute;left:850px;top:141px;width:3px;height:22px;background:#9CAAD2;"></div>
<div style="position:absolute;left:1263px;top:141px;width:1px;height:22px;background:#9CAAD2;"></div>
<div style="position:absolute;left:1264px;top:141px;width:22px;height:21px;background:#E9EEF9;"></div>
<svg style="position:absolute;left:31px;top:145px;" width="14" height="12" viewBox="0 0 14 12" shape-rendering="crispEdges"><rect x="0.5" y="0.5" width="13" height="11" fill="#F2F2F4" stroke="#2E7D32" stroke-width="1"/><path d="M6.3 3.6 C5.8 3 5.3 2.9 4.8 2.9 C3.4 2.9 2.6 4 2.6 5.8 C2.6 7.6 3.4 8.7 4.8 8.7 C5.3 8.7 5.8 8.5 6.3 8" fill="none" stroke="#424242" stroke-width="1.1" shape-rendering="auto"/><g fill="#424242"><rect x="8" y="3" width="1" height="6"/><rect x="10" y="3" width="1" height="6"/><rect x="7" y="4" width="5" height="1"/><rect x="7" y="7" width="5" height="1"/></g></svg>
<div class="t" style="left:48px;top:144px;font-size:12px;color:#1E1E1E;letter-spacing:-0.333px;">Proj</div>
<svg style="position:absolute;left:481px;top:151px;" width="6" height="4" viewBox="0 0 6 4"><path d="M0 0 H6 L3 3.5 Z" fill="#1E1E1E"/></svg>
<svg style="position:absolute;left:494px;top:141px;" width="20" height="20" viewBox="0 0 20 20"><g fill="#C27D1A"><path d="M7.9 2.9 L10.9 5.9 L5.9 10.9 L2.9 7.9 Z"/><path d="M15 7 L17 9 L13.6 11.2 L12.2 9.6 Z"/><path d="M15.6 12.2 L17 13.8 L14 16.9 L12.2 14.7 Z"/></g><path d="M9 8.3 H13.6 M10.5 8.3 V13.4 H13.6" fill="none" stroke="#C27D1A" stroke-width="1.2"/></svg>
<div class="t" style="left:515px;top:144px;font-size:12px;color:#1E1E1E;letter-spacing:-0.400px;">Proj.Sample</div>
<svg style="position:absolute;left:841px;top:151px;" width="6" height="4" viewBox="0 0 6 4"><path d="M0 0 H6 L3 3.5 Z" fill="#1E1E1E"/></svg>
<svg style="position:absolute;left:854px;top:141px;" width="20" height="20" viewBox="0 0 20 20" shape-rendering="crispEdges"><path d="M8.8 2.9 L12.9 4.8 V8.6 L6.8 11.8 L3.2 10 V5.7 Z" fill="#0050A0" shape-rendering="auto"/><path d="M6 6.6 L9.5 4.6" stroke="#F3E8F2" stroke-width="1.4" shape-rendering="auto"/><g fill="#2D2D30"><rect x="13" y="12" width="3" height="1"/><rect x="12" y="13" width="1" height="1"/><rect x="16" y="13" width="1" height="1"/><rect x="12" y="14" width="5" height="3"/></g><rect x="14" y="15" width="1" height="1" fill="#E0E0E0"/></svg>
<div class="t" style="left:874px;top:144px;font-size:12px;color:#1E1E1E;letter-spacing:-0.200px;">fieldA</div>
<svg style="position:absolute;left:1254px;top:151px;" width="6" height="4" viewBox="0 0 6 4"><path d="M0 0 H6 L3 3.5 Z" fill="#1E1E1E"/></svg>
<svg style="position:absolute;left:1268px;top:144px;" width="13" height="15" viewBox="0 0 13 15" shape-rendering="crispEdges"><g fill="#1E1E1E"><rect x="1" y="6" width="11" height="1"/><rect x="1" y="8" width="11" height="1"/><rect x="6" y="2" width="1" height="4"/><rect x="6" y="9" width="1" height="4"/></g><path d="M4 3.5 L6.5 0.8 L9 3.5 Z M4 11.5 L6.5 14.2 L9 11.5 Z" fill="#1E1E1E" shape-rendering="auto"/></svg>
<div style="position:absolute;left:27px;top:163px;width:1236px;height:701px;background:#FFFFFF;"></div>
<div style="position:absolute;left:27px;top:163px;width:17px;height:701px;background:#E6E7E8;"></div>
<div style="position:absolute;left:1263px;top:163px;width:23px;height:701px;background:#E8E8EC;"></div>
<svg style="position:absolute;left:1270px;top:170px;" width="9" height="4" viewBox="0 0 9 4"><path d="M0 4 L4.5 0 L9 4 Z" fill="#868999"/></svg>
<div style="position:absolute;left:1267px;top:180px;width:15px;height:140px;background:#C2C3C9;"></div>
<div style="position:absolute;left:1264px;top:183px;width:4px;height:23px;background:#68D068;"></div>
<div style="position:absolute;left:1264px;top:268px;width:4px;height:121px;background:#68D068;"></div>
<div style="position:absolute;left:1264px;top:232px;width:4px;height:5px;background:#F7D38B;"></div>
<div style="position:absolute;left:1264px;top:263px;width:4px;height:5px;background:#F7D38B;"></div>
<div style="position:absolute;left:1264px;top:295px;width:4px;height:5px;background:#F7D38B;"></div>
<div style="position:absolute;left:1264px;top:306px;width:4px;height:5px;background:#F7D38B;"></div>
<div style="position:absolute;left:1263px;top:194px;width:23px;height:2px;background:#0000CD;"></div>
<svg style="position:absolute;left:1270px;top:853px;" width="9" height="5" viewBox="0 0 9 5"><path d="M0 0 H9 L4.5 5 Z" fill="#868999"/></svg>
<div style="position:absolute;left:27px;top:864px;width:1259px;height:17px;background:#E8E8EC;"></div>
<div style="position:absolute;left:27px;top:864px;width:60px;height:17px;background:#FFFFFF;box-sizing:border-box;border-top:1px solid #C3CAD9;border-right:1px solid #C3CAD9;"></div>
<div class="t" style="left:30px;top:866px;font-size:12px;color:#1E1E1E;letter-spacing:-1.250px;">100 %</div>
<svg style="position:absolute;left:78px;top:872px;" width="6" height="4" viewBox="0 0 6 4"><path d="M0 0 H6 L3 3.5 Z" fill="#1E1E1E"/></svg>
<svg style="position:absolute;left:112px;top:869px;" width="10" height="10" viewBox="0 0 10 10"><circle cx="5" cy="5" r="4.8" fill="#388A34"/><path d="M2.5 5.2 L4.3 7 L7.6 3.5" fill="none" stroke="#FFFFFF" stroke-width="1.5"/></svg>
<div class="t" style="left:128px;top:866px;font-size:12px;color:#1E1E1E;letter-spacing:-0.286px;">No issues found</div>
<div style="position:absolute;left:269px;top:866px;width:1px;height:14px;background:#C9CBD6;"></div>
<svg style="position:absolute;left:284px;top:866px;" width="13" height="12" viewBox="0 0 13 12"><path d="M1.5 6.5 L6 2 L10 6 L5.5 10.5 Z" fill="none" stroke="#424242" stroke-width="1.2"/><path d="M7 3 L10.5 0.5 M8.5 4.5 L12 2" stroke="#424242" stroke-width="1.2"/></svg>
<svg style="position:absolute;left:302px;top:871px;" width="6" height="4" viewBox="0 0 6 4"><path d="M0 0 H6 L3 3.5 Z" fill="#1E1E1E"/></svg>
<svg style="position:absolute;left:338px;top:868px;" width="6" height="9" viewBox="0 0 6 9"><path d="M6 0 V9 L0 4.5 Z" fill="#C6CCD6"/></svg>
<svg style="position:absolute;left:1252px;top:868px;" width="6" height="9" viewBox="0 0 6 9"><path d="M0 0 V9 L6 4.5 Z" fill="#C6CCD6"/></svg>
<div style="position:absolute;left:0px;top:0px;width:1288px;height:1px;background:#000;"></div>
<div style="position:absolute;left:0px;top:0px;width:1px;height:882px;background:#000;"></div>
<div style="position:absolute;left:1287px;top:0px;width:1px;height:882px;background:#000;"></div>
<div style="position:absolute;left:0px;top:881px;width:1288px;height:1px;background:#000;"></div>
<div style="position:absolute;left:0;top:0;width:1263px;height:864px;overflow:hidden">
<div style="position:absolute;left:111px;top:227px;width:1px;height:637px;background:repeating-linear-gradient(to bottom,transparent 0,transparent 2px,#C8C8C8 2px,#C8C8C8 5px,transparent 5px,transparent 6px);"></div>
<div style="position:absolute;left:139px;top:275px;width:1px;height:432px;background:repeating-linear-gradient(to bottom,transparent 0,transparent 2px,#C8C8C8 2px,#C8C8C8 5px,transparent 5px,transparent 6px);"></div>
<div style="position:absolute;left:139px;top:787px;width:1px;height:77px;background:repeating-linear-gradient(to bottom,transparent 0,transparent 2px,#C8C8C8 2px,#C8C8C8 5px,transparent 5px,transparent 6px);"></div>
<div style="position:absolute;left:167px;top:339px;width:1px;height:96px;background:repeating-linear-gradient(to bottom,transparent 0,transparent 2px,#C8C8C8 2px,#C8C8C8 5px,transparent 5px,transparent 6px);"></div>
<div style="position:absolute;left:167px;top:467px;width:1px;height:96px;background:repeating-linear-gradient(to bottom,transparent 0,transparent 2px,#C8C8C8 2px,#C8C8C8 5px,transparent 5px,transparent 6px);"></div>
<div style="position:absolute;left:167px;top:595px;width:1px;height:96px;background:repeating-linear-gradient(to bottom,transparent 0,transparent 2px,#C8C8C8 2px,#C8C8C8 5px,transparent 5px,transparent 6px);"></div>
<div style="position:absolute;left:195px;top:355px;width:1px;height:16px;background:repeating-linear-gradient(to bottom,transparent 0,transparent 2px,#C8C8C8 2px,#C8C8C8 5px,transparent 5px,transparent 6px);"></div>
<div style="position:absolute;left:195px;top:403px;width:1px;height:16px;background:repeating-linear-gradient(to bottom,transparent 0,transparent 2px,#C8C8C8 2px,#C8C8C8 5px,transparent 5px,transparent 6px);"></div>
<div style="position:absolute;left:195px;top:483px;width:1px;height:16px;background:repeating-linear-gradient(to bottom,transparent 0,transparent 2px,#C8C8C8 2px,#C8C8C8 5px,transparent 5px,transparent 6px);"></div>
<div style="position:absolute;left:195px;top:531px;width:1px;height:16px;background:repeating-linear-gradient(to bottom,transparent 0,transparent 2px,#C8C8C8 2px,#C8C8C8 5px,transparent 5px,transparent 6px);"></div>
<div style="position:absolute;left:195px;top:611px;width:1px;height:16px;background:repeating-linear-gradient(to bottom,transparent 0,transparent 2px,#C8C8C8 2px,#C8C8C8 5px,transparent 5px,transparent 6px);"></div>
<div style="position:absolute;left:195px;top:659px;width:1px;height:16px;background:repeating-linear-gradient(to bottom,transparent 0,transparent 2px,#C8C8C8 2px,#C8C8C8 5px,transparent 5px,transparent 6px);"></div>
<div style="position:absolute;left:102px;top:209px;width:1px;height:655px;background:#A5A5A5;"></div>
<div style="position:absolute;left:102px;top:386px;width:4px;height:1px;background:#A5A5A5;"></div>
<div style="position:absolute;left:102px;top:434px;width:4px;height:1px;background:#A5A5A5;"></div>
<div style="position:absolute;left:102px;top:450px;width:4px;height:1px;background:#A5A5A5;"></div>
<div style="position:absolute;left:102px;top:514px;width:4px;height:1px;background:#A5A5A5;"></div>
<div style="position:absolute;left:102px;top:562px;width:4px;height:1px;background:#A5A5A5;"></div>
<div style="position:absolute;left:102px;top:578px;width:4px;height:1px;background:#A5A5A5;"></div>
<div style="position:absolute;left:102px;top:642px;width:4px;height:1px;background:#A5A5A5;"></div>
<div style="position:absolute;left:102px;top:690px;width:4px;height:1px;background:#A5A5A5;"></div>
<div style="position:absolute;left:102px;top:706px;width:4px;height:1px;background:#A5A5A5;"></div>
<div style="position:absolute;left:102px;top:722px;width:4px;height:1px;background:#A5A5A5;"></div>
<div style="position:absolute;left:96px;top:198px;width:11px;height:11px;background:#FFFFFF;"></div>
<div style="position:absolute;left:97px;top:199px;width:9px;height:9px;background:#FFFFFF;box-sizing:border-box;border:1px solid #A5A5A5;"></div>
<div style="position:absolute;left:99px;top:203px;width:5px;height:1px;background:#424242;"></div>
<div style="position:absolute;left:96px;top:246px;width:11px;height:11px;background:#FFFFFF;"></div>
<div style="position:absolute;left:97px;top:247px;width:9px;height:9px;background:#FFFFFF;box-sizing:border-box;border:1px solid #A5A5A5;"></div>
<div style="position:absolute;left:99px;top:251px;width:5px;height:1px;background:#424242;"></div>
<div style="position:absolute;left:96px;top:326px;width:11px;height:11px;background:#FFFFFF;"></div>
<div style="position:absolute;left:97px;top:327px;width:9px;height:9px;background:#FFFFFF;box-sizing:border-box;border:1px solid #A5A5A5;"></div>
<div style="position:absolute;left:99px;top:331px;width:5px;height:1px;background:#424242;"></div>
<div style="position:absolute;left:96px;top:342px;width:11px;height:11px;background:#FFFFFF;"></div>
<div style="position:absolute;left:97px;top:343px;width:9px;height:9px;background:#FFFFFF;box-sizing:border-box;border:1px solid #A5A5A5;"></div>
<div style="position:absolute;left:99px;top:347px;width:5px;height:1px;background:#424242;"></div>
<div style="position:absolute;left:96px;top:390px;width:11px;height:11px;background:#FFFFFF;"></div>
<div style="position:absolute;left:97px;top:391px;width:9px;height:9px;background:#FFFFFF;box-sizing:border-box;border:1px solid #A5A5A5;"></div>
<div style="position:absolute;left:99px;top:395px;width:5px;height:1px;background:#424242;"></div>
<div style="position:absolute;left:96px;top:454px;width:11px;height:11px;background:#FFFFFF;"></div>
<div style="position:absolute;left:97px;top:455px;width:9px;height:9px;background:#FFFFFF;box-sizing:border-box;border:1px solid #A5A5A5;"></div>
<div style="position:absolute;left:99px;top:459px;width:5px;height:1px;background:#424242;"></div>
<div style="position:absolute;left:96px;top:470px;width:11px;height:11px;background:#FFFFFF;"></div>
<div style="position:absolute;left:97px;top:471px;width:9px;height:9px;background:#FFFFFF;box-sizing:border-box;border:1px solid #A5A5A5;"></div>
<div style="position:absolute;left:99px;top:475px;width:5px;height:1px;background:#424242;"></div>
<div style="position:absolute;left:96px;top:518px;width:11px;height:11px;background:#FFFFFF;"></div>
<div style="position:absolute;left:97px;top:519px;width:9px;height:9px;background:#FFFFFF;box-sizing:border-box;border:1px solid #A5A5A5;"></div>
<div style="position:absolute;left:99px;top:523px;width:5px;height:1px;background:#424242;"></div>
<div style="position:absolute;left:96px;top:582px;width:11px;height:11px;background:#FFFFFF;"></div>
<div style="position:absolute;left:97px;top:583px;width:9px;height:9px;background:#FFFFFF;box-sizing:border-box;border:1px solid #A5A5A5;"></div>
<div style="position:absolute;left:99px;top:587px;width:5px;height:1px;background:#424242;"></div>
<div style="position:absolute;left:96px;top:598px;width:11px;height:11px;background:#FFFFFF;"></div>
<div style="position:absolute;left:97px;top:599px;width:9px;height:9px;background:#FFFFFF;box-sizing:border-box;border:1px solid #A5A5A5;"></div>
<div style="position:absolute;left:99px;top:603px;width:5px;height:1px;background:#424242;"></div>
<div style="position:absolute;left:96px;top:646px;width:11px;height:11px;background:#FFFFFF;"></div>
<div style="position:absolute;left:97px;top:647px;width:9px;height:9px;background:#FFFFFF;box-sizing:border-box;border:1px solid #A5A5A5;"></div>
<div style="position:absolute;left:99px;top:651px;width:5px;height:1px;background:#424242;"></div>
<div style="position:absolute;left:96px;top:758px;width:11px;height:11px;background:#FFFFFF;"></div>
<div style="position:absolute;left:97px;top:759px;width:9px;height:9px;background:#FFFFFF;box-sizing:border-box;border:1px solid #A5A5A5;"></div>
<div style="position:absolute;left:99px;top:763px;width:5px;height:1px;background:#424242;"></div>
<div style="position:absolute;left:96px;top:854px;width:11px;height:11px;background:#FFFFFF;"></div>
<div style="position:absolute;left:97px;top:855px;width:9px;height:9px;background:#FFFFFF;box-sizing:border-box;border:1px solid #A5A5A5;"></div>
<div style="position:absolute;left:99px;top:859px;width:5px;height:1px;background:#424242;"></div>
<div class="ln" style="top:164px;left:43px;"><div style="height:16px">1</div><div style="height:16px">2</div><div style="height:16px">3</div><div style="height:16px">4</div><div style="height:16px">5</div><div style="height:16px">6</div><div style="height:16px">7</div><div style="height:16px">8</div><div style="height:16px">9</div><div style="height:16px">10</div><div style="height:16px">11</div><div style="height:16px">12</div><div style="height:16px">13</div><div style="height:16px">14</div><div style="height:16px">15</div><div style="height:16px">16</div><div style="height:16px">17</div><div style="height:16px">18</div><div style="height:16px">19</div><div style="height:16px">20</div><div style="height:16px">21</div><div style="height:16px">22</div><div style="height:16px">23</div><div style="height:16px">24</div><div style="height:16px">25</div><div style="height:16px">26</div><div style="height:16px">27</div><div style="height:16px">28</div><div style="height:16px">29</div><div style="height:16px">30</div><div style="height:16px">31</div><div style="height:16px">32</div><div style="height:16px">33</div><div style="height:16px">34</div><div style="height:16px">35</div><div style="height:16px">36</div><div style="height:16px">37</div><div style="height:16px">38</div><div style="height:16px">39</div><div style="height:16px">40</div><div style="height:16px">41</div><div style="height:16px">42</div><div style="height:16px">43</div><div style="height:16px">44</div></div>
<div class="code"><div><span class="k">using</span> System;</div><div></div><div><span class="k">namespace</span> Proj</div><div>{</div><div></div><div>    <span class="k">public</span> <span class="k">class</span> <span class="c">Sample</span></div><div>    {</div><div>        <span class="k">string</span> fieldA;</div><div>        <span class="k">string</span> fieldC;</div><div>        <span class="k">int</span> fieldB;</div><div>        <span class="k">internal</span> <span class="k">string</span> PropertyA {</div><div>            <span class="k">get</span> {</div><div>                <span class="k">return</span> fieldA;</div><div>            }</div><div>            <span class="k">set</span> {</div><div>                fieldA = <span class="k">value</span>;</div><div>            }</div><div>        }</div><div>        <span class="k">internal</span> <span class="k">string</span> PropertyC {</div><div>            <span class="k">get</span> {</div><div>                <span class="k">return</span> fieldC;</div><div>            }</div><div>            <span class="k">set</span> {</div><div>                fieldC = <span class="k">value</span>;</div><div>            }</div><div>        }</div><div>        <span class="k">public</span> <span class="k">int</span> PropertyB {</div><div>            <span class="k">get</span> {</div><div>                <span class="k">return</span> fieldB;</div><div>            }</div><div>            <span class="k">set</span> {</div><div>                fieldB = <span class="k">value</span>;</div><div>            }</div><div>        }</div><div>    }</div><div></div><div></div><div>    <span class="k">public</span> <span class="k">class</span> <span class="c">Sample2</span></div><div>    {</div><div>        <span class="k">object</span> field2;</div><div></div><div>        <span class="k">string</span> firstName;</div><div></div><div>        <span class="g">#region</span> Private field and methods</div></div>
<svg style="position:absolute;left:79px;top:274px;" width="18" height="18" viewBox="0 0 18 18"><g transform="translate(9,9) rotate(-45) translate(-9.5,0)"><rect x="0.5" y="-2.8" width="7" height="5.6" rx="2.6" fill="#1F6FB5"/><rect x="3" y="-2.8" width="0.7" height="5.6" fill="#9FC3E6"/><rect x="5" y="-2.8" width="0.7" height="5.6" fill="#9FC3E6"/><rect x="2" y="-0.35" width="5.5" height="0.7" fill="#9FC3E6"/><rect x="7.5" y="-2.2" width="3" height="4.4" fill="#4A4F6A"/><rect x="10.5" y="-1" width="5" height="2" fill="#4A4F6A"/><rect x="15" y="-1.7" width="3.5" height="3.4" rx="1" fill="#4A4F6A"/></g></svg>
</div>
</body></html>
